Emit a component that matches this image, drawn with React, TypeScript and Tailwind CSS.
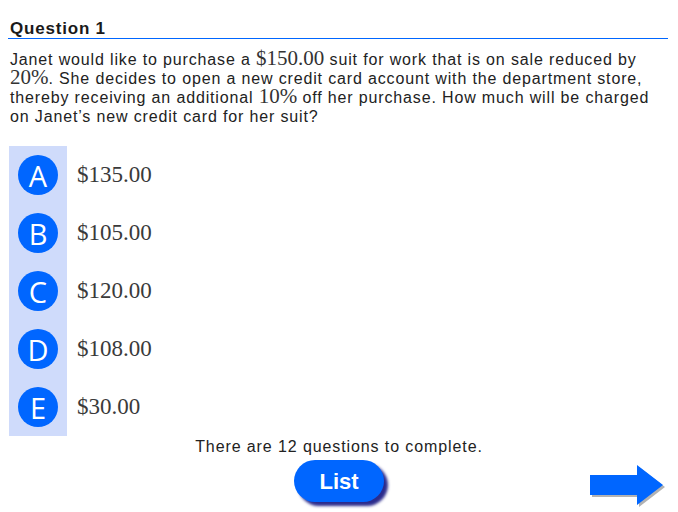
const choices = [
  { letter: "A", amount: "$135.00" },
  { letter: "B", amount: "$105.00" },
  { letter: "C", amount: "$120.00" },
  { letter: "D", amount: "$108.00" },
  { letter: "E", amount: "$30.00" },
];

function M({ children }: { children: React.ReactNode }) {
  return (
    <span className="inline-block h-[16px] align-baseline font-['Liberation_Serif',serif] text-[21px] leading-[16px] tracking-normal text-[#333]">
      {children}
    </span>
  );
}

export default function App() {
  return (
    <div className="w-[678px] h-[512px] bg-white text-[#222] font-['Liberation_Sans',Arial,sans-serif] overflow-hidden">
      {/* Header */}
      <div className="ml-[8px] mr-[10px] pt-[19px] border-b border-[#0066ff]">
        <h3 className="pl-[2px] text-[17px] leading-[19px] font-bold tracking-[0.8px] text-[#1a1a1a]">Question 1</h3>
      </div>

      {/* Question */}
      <p className="mt-[11px] ml-[10px] text-[16px] leading-[19px] tracking-[0.85px] whitespace-nowrap">
        Janet would like to purchase a <M>$150.00</M> suit for work that is on sale reduced by
        <br />
        <M>20%</M>. She decides to open a new credit card account with the department store,
        <br />
        thereby receiving an additional <M>10%</M> off her purchase. How much will be charged
        <br />
        on Janet’s new credit card for her suit?
      </p>

      {/* Choices */}
      <div className="mt-[20px] ml-[9px] flex">
        <div className="w-[58px] bg-[#cfdbfb] flex flex-col">
          {choices.map((c) => (
            <div key={c.letter} className="h-[58px] flex items-center justify-center">
              <div className="w-[40px] h-[40px] rounded-full bg-[#0066ff] flex items-center justify-center text-white font-['Open_Sans',sans-serif] text-[29px] leading-none">
                {c.letter}
              </div>
            </div>
          ))}
        </div>
        <div className="flex flex-col pl-[10px]">
          {choices.map((c) => (
            <div
              key={c.letter}
              className="h-[58px] flex items-center font-['Liberation_Serif',serif] text-[23px] text-[#3a3a3a]"
            >
              {c.amount}
            </div>
          ))}
        </div>
      </div>

      {/* Footer */}
      <p className="mt-[1px] text-center text-[16px] leading-[19px] tracking-[0.9px]">There are 12 questions to complete.</p>
      <div className="mt-[4px] grid grid-cols-[1fr_auto_1fr] items-start">
        <div />
        <button className="w-[90px] h-[42px] rounded-full bg-[#0066ff] text-white font-bold text-[22px] shadow-[4px_4px_3px_#2b2b8c]">
          List
        </button>
        <div className="flex justify-end pr-[11px]">
          <svg width="78" height="46" viewBox="0 0 78 46" className="mt-[4px]">
            <polygon
              points="3,13 50,13 50,3 76,23 50,43 50,33 3,33"
              fill="#555"
              opacity="0.45"
            />
            <polygon points="1,11 48,11 48,1 74,21 48,41 48,31 1,31" fill="#0066ff" />
          </svg>
        </div>
      </div>
    </div>
  );
}
